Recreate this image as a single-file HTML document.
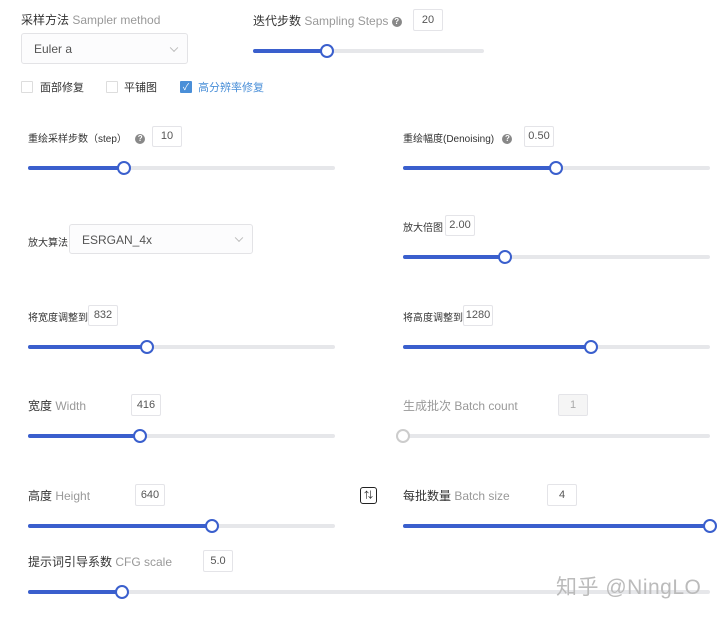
<!DOCTYPE html>
<html><head><meta charset="utf-8"><style>
body{margin:0;width:720px;height:617px;background:#fff;position:relative;overflow:hidden;font-family:"Liberation Sans","Noto Sans CJK SC",sans-serif;color:#333}
.a{position:absolute;white-space:nowrap}
.l{font-size:12px;color:#333}
.l span{color:#999}
.s{font-size:10px}
.b{position:absolute;border:1px solid #e4e4e8;border-radius:2px;font-size:11px;color:#555;background:#fff;box-sizing:border-box;display:flex;align-items:center;justify-content:center;line-height:1!important}
.t{position:absolute;height:4px;background:#e6e7ea;border-radius:2px}
.f{position:absolute;left:0;top:0;height:4px;background:#3a5fcd;border-radius:2px}
.h{position:absolute;top:-5px;width:10px;height:10px;border:2px solid #3a5fcd;border-radius:50%;background:#fff;margin-left:-7px}
.q{display:inline-block;width:10px;height:10px;border-radius:50%;background:#888;color:#fff;font-size:8px;line-height:10px;text-align:center;vertical-align:middle}
.cb{position:absolute;width:10px;height:10px;border:1px solid #ddd;border-radius:1px}
.sel{position:absolute;border:1px solid #e3e3e6;border-radius:3px;font-size:12px;color:#555;box-sizing:border-box;background:#fcfcfd}
.sel i{position:absolute;right:10px;top:50%;width:5px;height:5px;border-right:1px solid #bbb;border-bottom:1px solid #bbb;transform:translateY(-70%) rotate(45deg)}
</style></head><body>
<div class="a l" style="left:21px;top:11px">采样方法 <span>Sampler method</span></div>
<div class="sel" style="left:21px;top:33px;width:167px;height:31px"><div class="a" style="left:12px;top:8px">Euler a</div><i></i></div>
<div class="a l" style="left:253px;top:12px">迭代步数 <span>Sampling Steps</span> <b class="q">?</b></div>
<div class="b" style="left:413px;top:9px;width:30px;height:22px">20</div>
<div class="t" style="left:253px;top:49px;width:231px"><div class="f" style="width:74px"></div><div class="h" style="left:74px"></div></div>

<div class="cb" style="left:21px;top:81px"></div><div class="a l" style="left:40px;top:79px;font-size:11px">面部修复</div>
<div class="cb" style="left:106px;top:81px"></div><div class="a l" style="left:124px;top:79px;font-size:11px">平铺图</div>
<div class="cb" style="left:180px;top:81px;background:#4a8fd8;border-color:#4a8fd8;color:#fff;font-size:9px;line-height:10px;text-align:center">✓</div><div class="a l" style="left:198px;top:79px;font-size:11px;color:#4a8fd8">高分辨率修复</div>

<div class="a l s" style="left:28px;top:130px">重绘采样步数（step） &nbsp;&nbsp;<b class="q">?</b></div>
<div class="b" style="left:152px;top:126px;width:30px;height:21px">10</div>
<div class="t" style="left:28px;top:166px;width:307px"><div class="f" style="width:96px"></div><div class="h" style="left:96px"></div></div>

<div class="a l s" style="left:403px;top:130px">重绘幅度(Denoising) &nbsp;&nbsp;<b class="q">?</b></div>
<div class="b" style="left:524px;top:126px;width:30px;height:21px">0.50</div>
<div class="t" style="left:403px;top:166px;width:307px"><div class="f" style="width:153px"></div><div class="h" style="left:153px"></div></div>

<div class="a l s" style="left:28px;top:234px">放大算法</div>
<div class="sel" style="left:69px;top:224px;width:184px;height:30px"><div class="a" style="left:12px;top:8px">ESRGAN_4x</div><i></i></div>

<div class="a l s" style="left:403px;top:219px">放大倍图</div>
<div class="b" style="left:445px;top:215px;width:30px;height:21px">2.00</div>
<div class="t" style="left:403px;top:255px;width:307px"><div class="f" style="width:102px"></div><div class="h" style="left:102px"></div></div>

<div class="a l s" style="left:28px;top:309px">将宽度调整到</div>
<div class="b" style="left:88px;top:305px;width:30px;height:21px">832</div>
<div class="t" style="left:28px;top:345px;width:307px"><div class="f" style="width:119px"></div><div class="h" style="left:119px"></div></div>

<div class="a l s" style="left:403px;top:309px">将高度调整到</div>
<div class="b" style="left:463px;top:305px;width:30px;height:21px">1280</div>
<div class="t" style="left:403px;top:345px;width:307px"><div class="f" style="width:188px"></div><div class="h" style="left:188px"></div></div>

<div class="a l" style="left:28px;top:397px">宽度 <span>Width</span></div>
<div class="b" style="left:131px;top:394px;width:30px;height:22px">416</div>
<div class="t" style="left:28px;top:434px;width:307px"><div class="f" style="width:112px"></div><div class="h" style="left:112px"></div></div>

<div class="a l" style="left:403px;top:397px;color:#999">生成批次 Batch count</div>
<div class="b" style="left:558px;top:394px;width:30px;height:22px;background:#f5f5f5;color:#aaa">1</div>
<div class="t" style="left:403px;top:434px;width:307px"><div class="h" style="left:0;border-color:#ccc"></div></div>

<div class="a l" style="left:28px;top:487px">高度 <span>Height</span></div>
<div class="b" style="left:135px;top:484px;width:30px;height:22px">640</div>
<div class="t" style="left:28px;top:524px;width:307px"><div class="f" style="width:184px"></div><div class="h" style="left:184px"></div></div>

<div class="a" style="left:360px;top:487px;width:15px;height:15px;border:1.5px solid #222;border-radius:3px;font-size:9px;line-height:15px;text-align:center;color:#222">⇅</div>

<div class="a l" style="left:403px;top:487px">每批数量 <span>Batch size</span></div>
<div class="b" style="left:547px;top:484px;width:30px;height:22px">4</div>
<div class="t" style="left:403px;top:524px;width:307px"><div class="f" style="width:307px"></div><div class="h" style="left:307px"></div></div>

<div class="a l" style="left:28px;top:553px">提示词引导系数 <span>CFG scale</span></div>
<div class="b" style="left:203px;top:550px;width:30px;height:22px">5.0</div>
<div class="t" style="left:28px;top:590px;width:682px"><div class="f" style="width:94px"></div><div class="h" style="left:94px"></div></div>

<div class="a" style="left:556px;top:571px;font-size:21px;color:#bbb;letter-spacing:0.5px">知乎 @NingLO</div>
</body></html>
